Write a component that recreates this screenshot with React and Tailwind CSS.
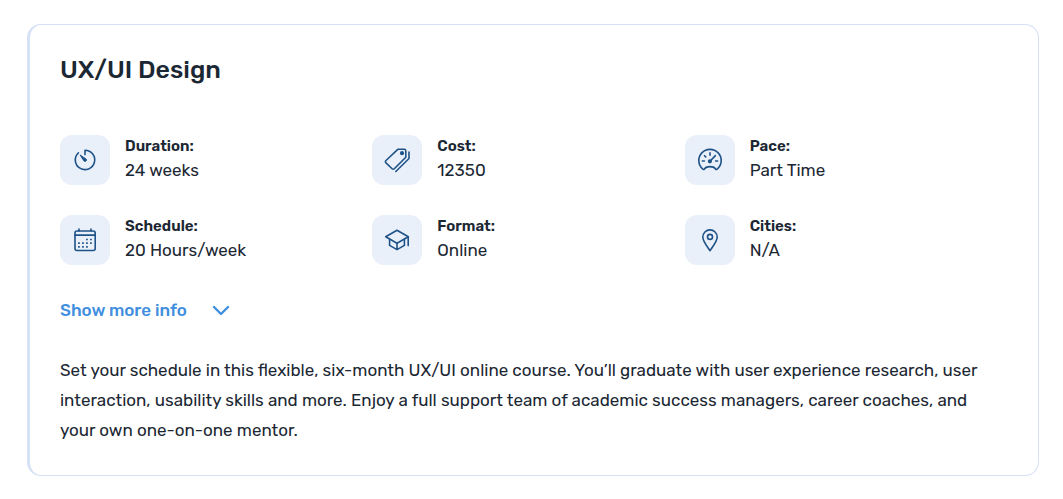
const TimerIcon = () => (
  <>
    <path d="M12 6.6V2.2a9.7 9.7 0 1 1-6.6 2.6" />
    <path d="M7.4 7.2l5.6 3.8a1.4 1.4 0 0 1-2 2z" fill="currentColor" strokeWidth="1" />
  </>
);

const TagsIcon = () => (
  <>
    <path d="M12.8 1.3h6.4q1.6 0 1.6 1.6v6.3L9.3 20.7q-1.1 1.1-2.2 0L1 14.8q-1.2-1.1 0-2.3z" />
    <path d="M24 4v6.5L10.8 23.5" />
    <circle cx="17" cy="5.2" r="1.3" fill="currentColor" />
  </>
);

const GaugeIcon = () => (
  <>
    <path d="M4.9 21.2A11.2 11.2 0 1 1 19.1 21.2c-.9.7-1.4.2-1.9-.7-1.8-2.5-8.6-2.5-10.4 0-.5.9-1 1.4-1.9.7z" />
    <path d="M12 4.8v2.4M4.4 13h2M17.6 13h2M6.5 7.7l1.2 1.2" />
    <path d="M17.4 7.6l-5 5.2" />
    <circle cx="11.9" cy="13.3" r="1.3" fill="currentColor" />
  </>
);

const CalendarIcon = () => (
  <>
    <rect x="2" y="3" width="20.2" height="19.5" rx="2" />
    <path d="M2 7.2h20.2" strokeWidth="1.8" />
    <path d="M6 1v2M18 1v2" />
    <path
      d="M13.1 11.5h1.7M17.1 11.5h1.7M5.1 15.2h1.7M9.1 15.2h1.7M13.1 15.2h1.7M17.1 15.2h1.7M5.1 18.9h1.7M9.1 18.9h1.7M13.1 18.9h1.7"
      strokeWidth="1.7"
      strokeLinecap="butt"
    />
  </>
);

const CapIcon = () => (
  <>
    <path d="M12 2.2L23.3 8.8 12 15.2.7 8.8z" />
    <path d="M4.6 11.2v6.2L12 21.6l7.4-4.2v-6.2M12 15.2v6.2M23.2 8.8v8.8" />
  </>
);

const PinIcon = () => (
  <>
    <path d="M12 22.7C9.8 19.4 4.8 13.6 4.8 9.1a7.2 7.2 0 0 1 14.4 0c0 4.5-5 10.3-7.2 13.6z" />
    <circle cx="12" cy="8.9" r="2.5" />
  </>
);

const details = [
  { label: "Duration:", value: "24 weeks", Icon: TimerIcon },
  { label: "Cost:", value: "12350", Icon: TagsIcon },
  { label: "Pace:", value: "Part Time", Icon: GaugeIcon },
  { label: "Schedule:", value: "20 Hours/week", Icon: CalendarIcon },
  { label: "Format:", value: "Online", Icon: CapIcon },
  { label: "Cities:", value: "N/A", Icon: PinIcon },
];

function Detail({ label, value, Icon }) {
  return (
    <div className="flex gap-[15px]">
      <div className="flex size-[50px] shrink-0 items-center justify-center rounded-xl bg-[#e9f0fa] text-[#1f5388]">
        <svg
          viewBox="0 0 24 24"
          className="size-6 overflow-visible"
          fill="none"
          stroke="currentColor"
          strokeWidth="1.6"
          strokeLinecap="round"
          strokeLinejoin="round"
          aria-hidden="true"
        >
          <Icon />
        </svg>
      </div>
      <div>
        <dt className="text-[15px] leading-[22px] font-semibold">{label}</dt>
        <dd className="text-[17px] leading-[26px]">{value}</dd>
      </div>
    </div>
  );
}

export default function App() {
  return (
    <main className="bg-white py-6 pr-6 pl-[27px] font-[Rubik,Roboto,sans-serif] text-[#1b2733]">
      <article className="rounded-[14px] border border-l-3 border-[#d5e1f5] pt-[27px] pr-[41px] pb-[30px] pl-[30px]">
        <h2 className="text-[25px] leading-9 font-medium">UX/UI Design</h2>
        <dl className="mt-[47px] grid grid-cols-3 gap-y-[30px]">
          {details.map((item) => (
            <Detail key={item.label} {...item} />
          ))}
        </dl>
        <button
          type="button"
          className="mt-[30px] flex items-center gap-[26px] text-[17px] leading-[30px] font-medium text-[#3f8ee0]"
        >
          Show more info
          <svg
            viewBox="0 0 16 10"
            className="h-[10px] w-4 overflow-visible"
            fill="none"
            stroke="currentColor"
            strokeWidth="2.4"
            strokeLinecap="round"
            strokeLinejoin="round"
            aria-hidden="true"
          >
            <path d="M1 2l7 7 7-7" />
          </svg>
        </button>
        <p className="mt-[30px] text-[17px] leading-[30px]">
          Set your schedule in this flexible, six-month UX/UI online course. You’ll graduate with user experience
          research, user interaction, usability skills and more. Enjoy a full support team of academic success managers,
          career coaches, and your own one-on-one mentor.
        </p>
      </article>
    </main>
  );
}
